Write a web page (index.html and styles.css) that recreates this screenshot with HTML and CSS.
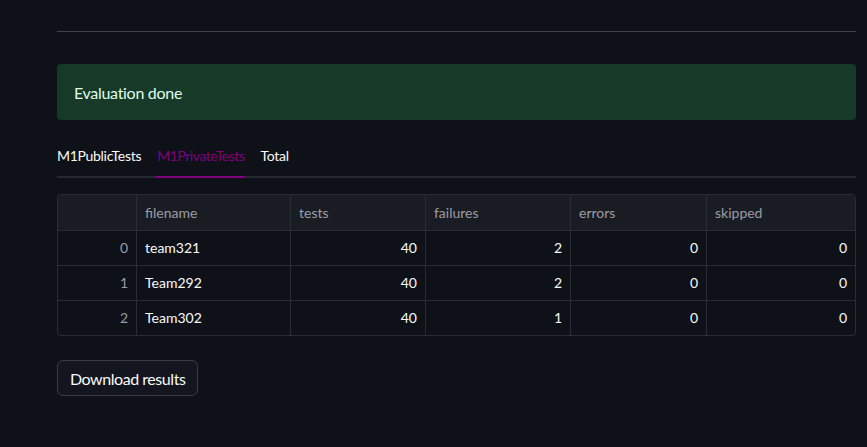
FILE: index.html
```html
<!DOCTYPE html>
<html>
<head>
<meta charset="utf-8">
<link rel="stylesheet" href="styles.css">
</head>
<body>
<main class="main">
  <hr class="divider">
  <div class="alert">Evaluation done</div>
  <div class="tabs">
    <span class="tab">M1PublicTests</span>
    <span class="tab active">M1PrivateTests</span>
    <span class="tab">Total</span>
  </div>
  <table class="df">
    <thead>
      <tr>
        <th class="c-idx"></th>
        <th class="c-file">filename</th>
        <th class="c-tests">tests</th>
        <th class="c-fail">failures</th>
        <th class="c-err">errors</th>
        <th>skipped</th>
      </tr>
    </thead>
    <tbody>
      <tr><td class="idx">0</td><td class="txt">team321</td><td>40</td><td>2</td><td>0</td><td>0</td></tr>
      <tr><td class="idx">1</td><td class="txt">Team292</td><td>40</td><td>2</td><td>0</td><td>0</td></tr>
      <tr><td class="idx">2</td><td class="txt">Team302</td><td>40</td><td>1</td><td>0</td><td>0</td></tr>
    </tbody>
  </table>
  <button class="btn">Download results</button>
</main>
</body>
</html>
```
FILE: styles.css
```css
html, body {
  margin: 0;
  background: #0e1117;
  color: #fafafa;
  font-family: "Lato", "Open Sans", sans-serif;
}
.main {
  padding: 31px 11px 0 57px;
  display: flex;
  flex-direction: column;
  align-items: flex-start;
}
.divider {
  align-self: stretch;
  margin: 0;
  border: 0;
  height: 1px;
  background: #3e4148;
}
.alert {
  align-self: stretch;
  margin-top: 32px;
  height: 56px;
  box-sizing: border-box;
  padding: 0 17px;
  display: flex;
  align-items: center;
  background: #173928;
  color: #dffde9;
  border-radius: 4px;
  font-size: 16px;
  letter-spacing: -0.3px;
}
.tabs {
  align-self: stretch;
  margin-top: 24px;
  display: flex;
  gap: 16px;
  border-bottom: 2px solid #262730;
  height: 32px;
}
.tab {
  font-size: 14px;
  line-height: 24px;
  padding-top: 0;
  color: #fafafa;
  position: relative;
  letter-spacing: -0.3px;
}
.tab.active {
  color: #800080;
  padding-left: 1px;
  margin-left: -1px;
  letter-spacing: -0.45px;
}
.tab.active::after {
  content: "";
  position: absolute;
  left: 0;
  right: 0;
  bottom: -2px;
  height: 2px;
  background: #800080;
}
.df {
  align-self: stretch;
  margin-top: 16px;
  border-collapse: separate;
  border-spacing: 0;
  border: 1px solid #2b2d34;
  border-radius: 4px;
  overflow: hidden;
  font-size: 14px;
  table-layout: fixed;
}
.df th, .df td {
  height: 35px;
  padding: 0 8px 1px;
  border-right: 1px solid #2b2d34;
  border-bottom: 1px solid #2b2d34;
  box-sizing: border-box;
}
.df th:last-child, .df td:last-child { border-right: 0; }
.df tbody tr:last-child td { border-bottom: 0; height: 34px; }
.df th {
  background: #1a1c24;
  color: #9a9ca5;
  font-weight: normal;
  text-align: left;
  height: 36px;
}
.df td {
  text-align: right;
  color: #fafafa;
}
.df td.idx { color: #9a9ca5; }
.df td.txt { text-align: left; }
.c-idx { width: 79px; }
.c-file { width: 154px; }
.c-tests { width: 135px; }
.c-fail { width: 145px; }
.c-err { width: 136px; }
.btn {
  margin-top: 24px;
  height: 36px;
  padding: 0 12px;
  background: #13161e;
  color: #fafafa;
  border: 1px solid #3a3c44;
  border-radius: 6px;
  font-family: inherit;
  font-size: 16px;
  letter-spacing: -0.45px;
}
```
